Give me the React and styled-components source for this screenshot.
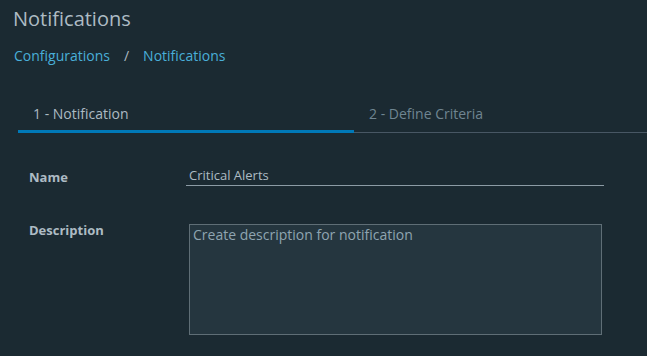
import React from "react";
import styled, { createGlobalStyle } from "styled-components";

const GlobalStyle = createGlobalStyle`
  html, body {
    margin: 0;
    padding: 0;
    background: #1b2a32;
  }
  body {
    font-family: "Open Sans", "Noto Sans", sans-serif;
  }
`;

const Page = styled.div`
  width: 647px;
  height: 356px;
  overflow: hidden;
  background: #1b2a32;
`;

const Title = styled.h1`
  margin: 0;
  padding: 6px 0 0 13px;
  font-size: 20px;
  line-height: 26px;
  font-weight: 400;
  color: #adbbc4;
`;

const Breadcrumb = styled.nav`
  display: flex;
  align-items: center;
  gap: 14px;
  padding: 14px 0 0 14px;
  font-size: 14px;
  line-height: 20px;
`;

const Crumb = styled.a`
  color: #49afd9;
  text-decoration: none;
`;

const Sep = styled.span`
  color: #adbbc4;
`;

const Tabs = styled.div`
  display: flex;
  margin: 38px 0 0 18px;
  border-bottom: 1px solid #485764;
`;

const Tab = styled.div`
  flex: ${(p) => (p.$active ? "0 0 336px" : "1 1 auto")};
  padding: 0 0 5px 15px;
  box-sizing: border-box;
  font-size: 14px;
  line-height: 20px;
  color: ${(p) => (p.$active ? "#acbac3" : "#6f8591")};
  box-shadow: ${(p) => (p.$active ? "inset 0 -3px 0 #0079b8" : "none")};
  margin-bottom: -1px;
  padding-bottom: ${(p) => (p.$active ? "9px" : "8px")};
`;

const Form = styled.div`
  display: grid;
  grid-template-columns: 157px 418px;
  row-gap: 38px;
  padding: 33px 0 0 29px;
`;

const Label = styled.label`
  font-size: 13px;
  font-weight: 700;
  color: #adbbc4;
  line-height: 18px;
  margin-top: ${(p) => p.$top || 0}px;
`;

const TextInput = styled.div`
  font-size: 13px;
  line-height: 18px;
  color: #adbbc4;
  padding: 0 0 1px 3px;
  border-bottom: 1px solid #8c9ba5;
`;

const TextArea = styled.div`
  margin-left: 3px;
  width: 413px;
  height: 111px;
  box-sizing: border-box;
  background: #25363f;
  border: 1px solid #5f6e76;
  padding: 1px 3px;
  font-size: 14px;
  line-height: 18px;
  color: #8fa5b1;
`;

export default function App() {
  return (
    <Page>
      <GlobalStyle />
      <Title>Notifications</Title>
      <Breadcrumb>
        <Crumb href="#">Configurations</Crumb>
        <Sep>/</Sep>
        <Crumb href="#">Notifications</Crumb>
      </Breadcrumb>
      <Tabs>
        <Tab $active>1 - Notification</Tab>
        <Tab>2 - Define Criteria</Tab>
      </Tabs>
      <Form>
        <Label $top={2}>Name</Label>
        <TextInput>Critical Alerts</TextInput>
        <Label $top={-3}>Description</Label>
        <TextArea>Create description for notification</TextArea>
      </Form>
    </Page>
  );
}
